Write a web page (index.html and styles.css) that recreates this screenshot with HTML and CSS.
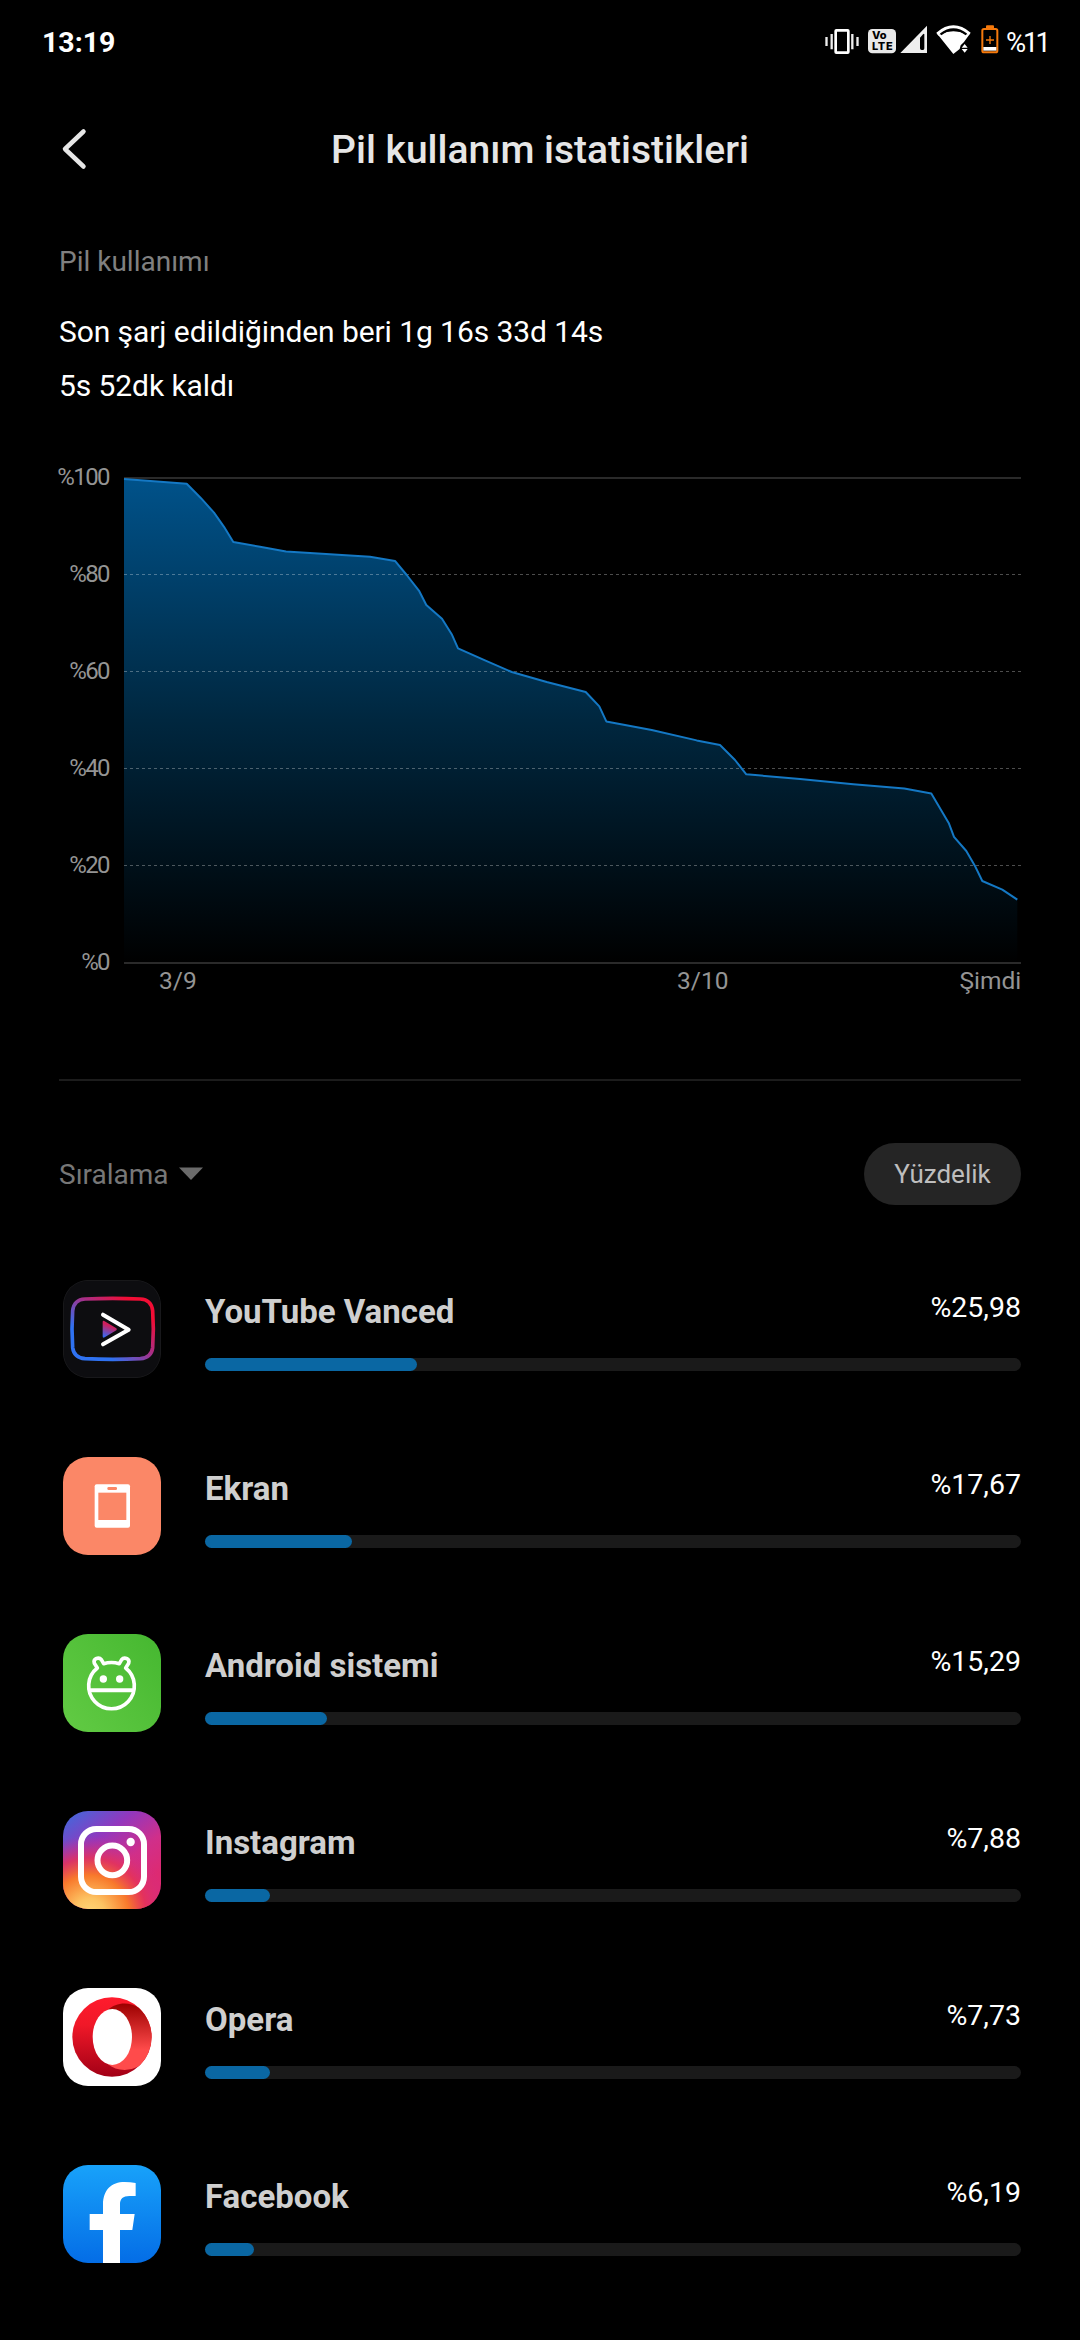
FILE: index.html
```html
<!DOCTYPE html>
<html lang="tr">
<head>
    <meta charset="UTF-8">
    <title>Pil kullanım istatistikleri</title>
    <link rel="stylesheet" href="styles.css">
</head>
<body>
    <div class="status-bar">
        <span class="clock">13:19</span>
        <div class="status-icons">
            <svg class="ic-vibrate" width="34" height="36" viewBox="0 0 102 108">
                <rect x="32" y="19" width="38" height="67" rx="2" fill="none" stroke="#fff" stroke-width="8"/>
                <path d="M20 30V76M82 30V76M4.500 39V66M97.500 39V66" stroke="#eee" stroke-width="7"/>
            </svg>
            <svg class="ic-volte" width="28" height="36" viewBox="0 0 84 108">
                <rect x="0" y="15" width="84" height="73" rx="13" fill="#e8e8e8"/>
                <text x="12" y="46" class="volte-text">Vo</text>
                <text x="12" y="79" class="volte-text" textLength="62">LTE</text>
            </svg>
            <svg class="ic-signal" width="28" height="36" viewBox="0 0 84 108">
                <path fill-rule="evenodd" fill="#eee" d="M81 5V87H1ZM73 31Q72 28 69 31L60 41V73Q60 78 65 78H69Q73 78 73 73Z"/>
            </svg>
            <svg class="ic-wifi" width="35" height="36" viewBox="0 0 105 108">
                <path fill="#fff" d="M1 26Q52 -18 104 26L98 35Q52 -4 7 35Z"/>
                <path fill="#fff" d="M1 26L7 35L10 32Q52 12 95 32L98 35L104 26L84 54L74 64L71 75L52 90Z"/>
                <path d="M14 31Q52 1 91 31" fill="none" stroke="#000" stroke-width="7"/>
                <path d="M77 71L86 60L95 71ZM77 75L86 86L95 75Z" fill="#fff"/>
            </svg>
            <svg class="ic-battery" width="18" height="36" viewBox="0 0 54 108">
                <rect x="15" y="4" width="24" height="10" rx="3" fill="#f5790c"/>
                <rect x="4" y="15" width="45" height="70" rx="5" fill="none" stroke="#f5790c" stroke-width="6"/>
                <rect x="7" y="69" width="39" height="11" fill="#fff"/>
                <path d="M27 36V60M15 48H39" stroke="#f5790c" stroke-width="4"/>
            </svg>
            <span class="battery-level">%11</span>
        </div>
    </div>

    <div class="header">
        <svg class="back" width="30" height="48" viewBox="0 0 30 48">
            <path d="M23.500 5.500L5 23L23.500 40.500" fill="none" stroke="#e6e6e6" stroke-width="4.500" stroke-linecap="round" stroke-linejoin="round"/>
        </svg>
        <h1 class="title">Pil kullanım istatistikleri</h1>
    </div>

    <div class="summary">
        <h2 class="summary-label">Pil kullanımı</h2>
        <p class="summary-line">Son şarj edildiğinden beri 1g 16s 33d 14s</p>
        <p class="summary-line">5s 52dk kaldı</p>
    </div>

    <svg class="chart" width="962" height="570" viewBox="59 440 962 570">
        <defs>
            <linearGradient id="area" gradientUnits="userSpaceOnUse" x1="0" y1="478" x2="0" y2="963">
                <stop offset="0" stop-color="#00528a"/>
                <stop offset="0.500" stop-color="#00273f"/>
                <stop offset="1" stop-color="#000"/>
            </linearGradient>
        </defs>
        <path fill="url(#area)" d="M124 479L186.700 483.700L201 498.200L214 512.700L224 526.800L233.300 542L260 546.800L286 551.600L370 556.700L395 560.900L406.700 575L419.300 591.200L426.300 605L442 618.700L451.700 634.200L458 648.300L485 660.400L511.700 672L546.700 682L585.700 692L599.300 706.400L606.300 721.400L651.700 730L696.700 740.400L720 745L735 760L746.300 774.300L800 779L853.300 784.300L904.300 788.600L931.300 793.600L948.700 822.900L954 836.800L966.300 851L974.700 865.400L982.300 881L1002.300 889.600L1017.300 899.600V963H124Z"/>
        <path class="grid-solid" d="M124 478H1021M124 963H1021"/>
        <path class="grid-dashed" d="M124 574.500H1021M124 671.500H1021M124 768.500H1021M124 865.500H1021"/>
        <path class="level-line" d="M124 479L186.700 483.700L201 498.200L214 512.700L224 526.800L233.300 542L260 546.800L286 551.600L370 556.700L395 560.900L406.700 575L419.300 591.200L426.300 605L442 618.700L451.700 634.200L458 648.300L485 660.400L511.700 672L546.700 682L585.700 692L599.300 706.400L606.300 721.400L651.700 730L696.700 740.400L720 745L735 760L746.300 774.300L800 779L853.300 784.300L904.300 788.600L931.300 793.600L948.700 822.900L954 836.800L966.300 851L974.700 865.400L982.300 881L1002.300 889.600L1017.300 899.600"/>
        <g class="axis-y">
            <text x="109" y="485">%100</text>
            <text x="109" y="581.500">%80</text>
            <text x="109" y="678.500">%60</text>
            <text x="109" y="775.500">%40</text>
            <text x="109" y="872.500">%20</text>
            <text x="109" y="969.500">%0</text>
        </g>
        <g class="axis-x">
            <text x="159" y="989">3/9</text>
            <text x="677" y="989">3/10</text>
            <text x="959.500" y="989">Şimdi</text>
        </g>
    </svg>

    <div class="divider"></div>

    <div class="toolbar">
        <div class="sort">
            <span>Sıralama</span>
            <svg class="caret" width="24" height="14" viewBox="0 0 24 14"><path d="M0 0.500H24L12 13Z" fill="#6a6a6a"/></svg>
        </div>
        <button class="mode">Yüzdelik</button>
    </div>

    <ul class="apps">
        <li class="app">
            <svg class="app-icon" viewBox="0 0 294 294">
                <defs>
                    <linearGradient id="vr" gradientUnits="userSpaceOnUse" x1="70" y1="240" x2="225" y2="50">
                        <stop offset="0.200" stop-color="#2f72f2"/>
                        <stop offset="0.550" stop-color="#a5308a"/>
                        <stop offset="0.900" stop-color="#f20d35"/>
                    </linearGradient>
                    <linearGradient id="vp" x1="0.300" y1="0" x2="0" y2="1">
                        <stop offset="0.200" stop-color="#d01f5c"/>
                        <stop offset="0.900" stop-color="#3b68f0"/>
                    </linearGradient>
                </defs>
                <rect width="294" height="294" fill="#0d0d10"/>
                <rect x="1" y="1" width="292" height="292" rx="74" fill="none" stroke="#222224" stroke-width="2"/>
                <path d="M66 57Q149 53 232 57Q265 59 269 92Q273 148 269 203Q265 233 232 236Q149 240 66 236Q33 233 29 203Q25 148 29 92Q33 59 66 57Z" fill="none" stroke="url(#vr)" stroke-width="11"/>
                <path d="M119 127Q119 120 125 124L160 145Q163 148 160 151L125 172Q119 176 119 169Z" fill="url(#vp)"/>
                <path d="M120 104L197 149L120 193" fill="none" stroke="#fff" stroke-width="12" stroke-linecap="round" stroke-linejoin="round"/>
            </svg>
            <div class="app-info">
                <div class="app-row"><span class="app-name">YouTube Vanced</span><span class="app-percent">%25,98</span></div>
                <div class="bar"><div class="bar-fill" style="width: 26%"></div></div>
            </div>
        </li>
        <li class="app">
            <svg class="app-icon" viewBox="0 0 294 294">
                <rect width="294" height="294" fill="#fb8767"/>
                <rect x="95" y="82" width="106" height="130" rx="6" fill="#fff"/>
                <rect x="106" y="107" width="84" height="82" fill="#fb8767"/>
                <rect x="133" y="90" width="29" height="9" rx="4" fill="#fb8767"/>
            </svg>
            <div class="app-info">
                <div class="app-row"><span class="app-name">Ekran</span><span class="app-percent">%17,67</span></div>
                <div class="bar"><div class="bar-fill" style="width: 18%"></div></div>
            </div>
        </li>
        <li class="app">
            <svg class="app-icon" viewBox="0 0 294 294">
                <defs>
                    <linearGradient id="ag" x1="0" y1="1" x2="1" y2="0.200">
                        <stop offset="0" stop-color="#62cb44"/>
                        <stop offset="1" stop-color="#48b932"/>
                    </linearGradient>
                </defs>
                <rect width="294" height="294" fill="url(#ag)"/>
                <g fill="none" stroke="#fff" stroke-width="11" stroke-linejoin="round">
                    <path d="M103 102L94 88Q91 78 99 74Q109 69 115 77L122 89Q145 82 169 89L176 77Q182 69 192 74Q200 78 197 88L188 102A68.500 68.500 0 1 1 103 102Z"/>
                    <path d="M78 169H213" stroke-width="12"/>
                </g>
                <circle cx="121" cy="135" r="11" fill="#fff"/>
                <circle cx="170" cy="135" r="11" fill="#fff"/>
            </svg>
            <div class="app-info">
                <div class="app-row"><span class="app-name">Android sistemi</span><span class="app-percent">%15,29</span></div>
                <div class="bar"><div class="bar-fill" style="width: 15%"></div></div>
            </div>
        </li>
        <li class="app">
            <svg class="app-icon" viewBox="0 0 294 294">
                <defs>
                    <linearGradient id="ib" x1="0.150" y1="0" x2="0.750" y2="0.800">
                        <stop offset="0" stop-color="#4b62d8"/>
                        <stop offset="0.350" stop-color="#9337bd"/>
                        <stop offset="0.700" stop-color="#d02f8a"/>
                        <stop offset="1" stop-color="#dd2a72"/>
                    </linearGradient>
                    <radialGradient id="iy" gradientUnits="userSpaceOnUse" cx="80" cy="310" r="235">
                        <stop offset="0" stop-color="#ffd879"/>
                        <stop offset="0.200" stop-color="#fdc463"/>
                        <stop offset="0.500" stop-color="#f8792c"/>
                        <stop offset="0.720" stop-color="#e53358" stop-opacity="0.850"/>
                        <stop offset="1" stop-color="#d02f8a" stop-opacity="0"/>
                    </radialGradient>
                </defs>
                <rect width="294" height="294" fill="url(#ib)"/>
                <rect width="294" height="294" fill="url(#iy)"/>
                <rect x="54" y="54" width="189" height="189" rx="46" fill="none" stroke="#fff" stroke-width="18"/>
                <circle cx="148" cy="148" r="44.500" fill="none" stroke="#fff" stroke-width="18"/>
                <circle cx="203" cy="93" r="12.500" fill="#fff"/>
            </svg>
            <div class="app-info">
                <div class="app-row"><span class="app-name">Instagram</span><span class="app-percent">%7,88</span></div>
                <div class="bar"><div class="bar-fill" style="width: 8%"></div></div>
            </div>
        </li>
        <li class="app">
            <svg class="app-icon" viewBox="0 0 294 294">
                <defs>
                    <linearGradient id="ol" x1="0" y1="0" x2="0" y2="1">
                        <stop offset="0" stop-color="#ff1b2d"/>
                        <stop offset="0.350" stop-color="#f01828"/>
                        <stop offset="1" stop-color="#a20016"/>
                    </linearGradient>
                    <linearGradient id="or" x1="0" y1="0" x2="0" y2="1">
                        <stop offset="0" stop-color="#9c0000"/>
                        <stop offset="0.700" stop-color="#ff4b4b"/>
                        <stop offset="1" stop-color="#ff4b4b"/>
                    </linearGradient>
                </defs>
                <rect width="294" height="294" fill="#fff"/>
                <circle cx="147" cy="147" r="119" fill="url(#ol)"/>
                <path d="M134 66C158 44 196 40 227 59A119 119 0 0 1 227 235C196 252 158 248 134 228Z" fill="url(#or)"/>
                <ellipse cx="148" cy="147" rx="59" ry="84" fill="#fff"/>
            </svg>
            <div class="app-info">
                <div class="app-row"><span class="app-name">Opera</span><span class="app-percent">%7,73</span></div>
                <div class="bar"><div class="bar-fill" style="width: 8%"></div></div>
            </div>
        </li>
        <li class="app">
            <svg class="app-icon" viewBox="0 0 294 294">
                <defs>
                    <linearGradient id="fb" x1="0" y1="0" x2="0" y2="1">
                        <stop offset="0" stop-color="#18a2fa"/>
                        <stop offset="1" stop-color="#046de6"/>
                    </linearGradient>
                </defs>
                <rect width="294" height="294" fill="url(#fb)"/>
                <path fill="#fff" d="M120 294V195H80V147H120V119C120 75 145 51 185 51Q202 51 218 54V93H199C180 93 171 101 171 118V147H215L208 195H171V294Z"/>
            </svg>
            <div class="app-info">
                <div class="app-row"><span class="app-name">Facebook</span><span class="app-percent">%6,19</span></div>
                <div class="bar"><div class="bar-fill" style="width: 6%"></div></div>
            </div>
        </li>
    </ul>
</body>
</html>
```
FILE: styles.css
```css
* {
    box-sizing: border-box;
}

body {
    width: 1080px;
    height: 2340px;
    margin: 0;
    overflow: hidden;
    background: #000;
    color: #fff;
    font-family: Roboto, "Noto Sans", sans-serif;
}

h1, h2, p, ul {
    margin: 0;
    padding: 0;
}

/* status bar */
.status-bar {
    display: flex;
    align-items: center;
    justify-content: space-between;
    height: 84px;
    padding: 0 32px 0 42px;
}

.clock {
    font-size: 28.5px;
    font-weight: 700;
}

.status-icons {
    display: flex;
    align-items: center;
}

.ic-volte {
    margin-left: 9px;
}

.ic-signal {
    margin-left: 4px;
}

.ic-wifi {
    margin-left: 8px;
}

.ic-battery {
    margin-left: 10px;
}

.volte-text {
    font-family: Inter, sans-serif;
    font-size: 33px;
    font-weight: 800;
    fill: #000;
}

.battery-level {
    margin-left: 7px;
    font-size: 27.5px;
    letter-spacing: -3px;
}

/* title */
.header {
    display: flex;
    align-items: center;
    height: 132px;
    padding: 0 60px;
}

.title {
    flex: 1;
    padding-right: 30px;
    text-align: center;
    font-size: 39px;
    font-weight: 500;
    color: #e6e6e6;
}

/* summary */
.summary {
    padding: 26px 59px 0;
}

.summary-label {
    margin-bottom: 23px;
    line-height: 40px;
    font-size: 28px;
    font-weight: 400;
    color: #808080;
}

.summary-line {
    font-size: 30px;
    line-height: 53.5px;
    letter-spacing: -0.08px;
}

/* chart */
.chart {
    display: block;
    margin: 28px 59px 0;
    overflow: visible;
}

.grid-solid {
    stroke: #2a2a2a;
    stroke-width: 2;
}

.grid-dashed {
    stroke: #fff;
    stroke-opacity: 0.3;
    stroke-width: 1;
    stroke-dasharray: 3 3;
}

.level-line {
    fill: none;
    stroke: #1478c4;
    stroke-width: 2;
    stroke-linejoin: round;
}

.axis-y,
.axis-x {
    fill: #949494;
}

.axis-x {
    font-size: 24.5px;
}

.axis-y {
    font-size: 24px;
    letter-spacing: -1.6px;
    text-anchor: end;
}

.divider {
    height: 2px;
    margin: 69px 59px 0;
    background: #1c1c1c;
}

/* sort + mode */
.toolbar {
    display: flex;
    align-items: center;
    justify-content: space-between;
    padding: 62px 59px 0;
}

.sort {
    display: flex;
    align-items: center;
    gap: 10px;
    font-size: 28px;
    color: #777;
}

.mode {
    width: 157px;
    height: 62px;
    padding: 0;
    border: none;
    border-radius: 31px;
    background: #252525;
    color: #bebebe;
    font-family: inherit;
    font-size: 26px;
}

/* app list */
.apps {
    margin-top: 75px;
    padding: 0 59px 0 63px;
    list-style: none;
}

.app {
    display: flex;
    gap: 44px;
    margin-bottom: 79px;
}

.app-icon {
    flex: none;
    width: 98px;
    height: 98px;
    border-radius: 25px;
}

.app-info {
    flex: 1;
    padding-top: 8px;
}

.app-row {
    display: flex;
    justify-content: space-between;
    align-items: flex-start;
}

.app-name {
    font-size: 33px;
    font-weight: 700;
    line-height: 48px;
    color: #cfcfcf;
}

.app-percent {
    font-size: 28.5px;
    line-height: 40px;
}

.bar {
    height: 13px;
    margin-top: 22px;
    border-radius: 6.5px;
    background: #1a1a1a;
}

.bar-fill {
    height: 100%;
    border-radius: 6.5px;
    background: #0a67a3;
}
```
